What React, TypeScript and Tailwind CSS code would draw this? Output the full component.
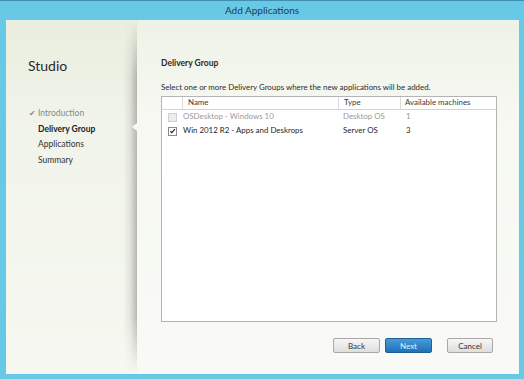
import React from "react";

const font = { fontFamily: 'Lato, "Noto Sans", sans-serif' };

function Check({ className = "" }: { className?: string }) {
  return (
    <svg viewBox="0 0 10 10" className={className}>
      <path d="M1.8 5.2 L4 7.4 L8.4 2.4" fill="none" stroke="currentColor" strokeWidth="1.7" />
    </svg>
  );
}

export default function App() {
  return (
    <div
      className="w-[524px] h-[379px] bg-[#68c9e7] flex flex-col border-t border-[#3f8fae] overflow-hidden"
      style={font}
    >
      <div className="h-[19px] flex items-center justify-center text-[10px] text-[#1d3c4e]">
        Add Applications
      </div>
      <div className="flex-1 flex pl-[6px] pr-[5px] pb-[5px]">
        <div className="flex-1 flex bg-[linear-gradient(to_bottom,#e9eedf_0%,#f1f4ea_30%,#f6f8f1_100%)]">
          {/* left nav */}
          <div className="w-[117px] flex flex-col pl-[22px] pt-[36px]">
            <div className="text-[14px] leading-[20px] text-[#2b2b2b]">Studio</div>
            <div className="mt-[30px] pl-[10px] flex flex-col text-[8.5px] leading-[15.7px]">
              <div className="text-[#8a8a8a] -ml-[9px] flex items-center gap-[2px]">
                <span className="text-[8px] text-[#8a8a8a]">✔</span>
                <span>Introduction</span>
              </div>
              <div className="font-bold text-[#222]">Delivery Group</div>
              <div className="text-[#333]">Applications</div>
              <div className="text-[#333]">Summary</div>
            </div>
          </div>
          {/* shadow separator */}
          <div className="relative w-[14px] bg-[linear-gradient(to_right,rgba(0,0,0,0)_0%,rgba(0,0,0,0.07)_50%,rgba(0,0,0,0.25)_100%)] [mask-image:linear-gradient(to_bottom,transparent_0%,black_16%,black_84%,transparent_100%)]">
            <div className="absolute right-0 top-[103px] w-0 h-0 border-y-[4px] border-y-transparent border-r-[5px] border-r-[#f8f9f5]" />
          </div>
          {/* right panel */}
          <div className="flex-1 flex flex-col pl-[24px] pr-[22px] pt-[37px] bg-[linear-gradient(to_bottom,#eef2e6_0%,#f6f8f1_25%,#f9faf6_100%)]">
            <div className="text-[8.5px] leading-[12px] font-bold text-[#2a2a2a]">Delivery Group</div>
            <div className="mt-[12px] text-[7.9px] leading-[12px] text-[#2a2a2a]">
              Select one or more Delivery Groups where the new applications will be added.
            </div>
            <div className="mt-[3px] h-[226px] border border-[#b4b4b4] bg-white flex flex-col text-[7.9px]">
              <div className="h-[13px] flex border-b border-[#d4d4d4] text-[#3a3a3a]">
                <div className="w-[21px] border-r border-[#dcdcdc]" />
                <div className="w-[156px] border-r border-[#dcdcdc] pl-[5px] flex items-center">Name</div>
                <div className="w-[62px] border-r border-[#dcdcdc] pl-[5px] flex items-center">Type</div>
                <div className="flex-1 pl-[4px] flex items-center">Available machines</div>
              </div>
              <div className="h-[14px] flex items-center text-[#9a9a9a]">
                <div className="w-[21px] flex justify-center">
                  <div className="w-[9px] h-[9px] border border-[#d0d0d0] bg-[#ececec]" />
                </div>
                <div className="w-[156px] pl-[0px]">OSDesktop - Windows 10</div>
                <div className="w-[62px] pl-[4px]">Desktop OS</div>
                <div className="flex-1 pl-[5px]">1</div>
              </div>
              <div className="h-[14px] flex items-center text-[#262626]">
                <div className="w-[21px] flex justify-center">
                  <div className="w-[9px] h-[9px] border border-[#8a8a8a] bg-white text-[#222] flex items-center justify-center">
                    <Check className="w-[8px] h-[8px]" />
                  </div>
                </div>
                <div className="w-[156px] pl-[0px]">Win 2012 R2 - Apps and Deskrops</div>
                <div className="w-[62px] pl-[4px]">Server OS</div>
                <div className="flex-1 pl-[5px]">3</div>
              </div>
            </div>
            <div className="mt-[16px] flex justify-end text-[8px]">
              <button className="w-[47px] h-[15px] rounded-[2px] border border-[#a8a8a8] bg-[linear-gradient(to_bottom,#f6f6f6,#dedede)] text-[#333] flex items-center justify-center">
                Back
              </button>
              <button className="ml-[5px] w-[47px] h-[15px] rounded-[2px] border border-[#1d5f99] bg-[linear-gradient(to_bottom,#4a9ad6,#1f72b8)] text-[#e3f0fb] flex items-center justify-center">
                Next
              </button>
              <button className="ml-[15px] mr-[4px] w-[46px] h-[15px] rounded-[2px] border border-[#a8a8a8] bg-[linear-gradient(to_bottom,#f6f6f6,#dedede)] text-[#333] flex items-center justify-center">
                Cancel
              </button>
            </div>
          </div>
        </div>
      </div>
    </div>
  );
}
